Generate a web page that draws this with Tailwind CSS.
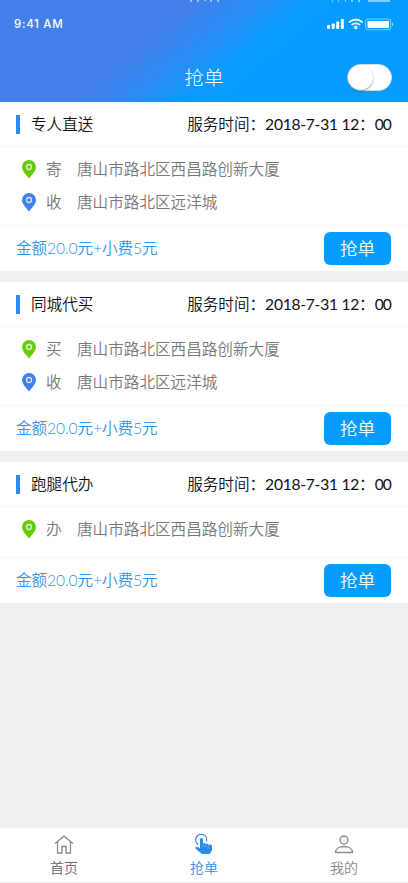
<!DOCTYPE html>
<html lang="zh-CN">
<head>
    <meta charset="UTF-8">
    <meta name="viewport" content="width=device-width, initial-scale=1.0">
    <title>抢单</title>
    <script src="https://cdn.jsdelivr.net/npm/@tailwindcss/browser@4"></script>
</head>
<body class="bg-[#f0f0f0] font-['Lato','Noto_Sans_CJK_SC',sans-serif] font-[350]">
<div class="w-[408px] h-[883px] flex flex-col overflow-hidden">

    <!-- header -->
    <header class="relative h-[102px] shrink-0 text-white bg-[linear-gradient(140deg,#4480e9_0%,#4480e9_37%,#2c8bf3_47%,#0a9bfe_59%,#059cff_66%)]">
        <svg class="absolute top-0 left-0" width="408" height="3" fill="#fff" fill-opacity=".5">
            <path d="M190 0h2v2h-2zM197 0h2v2h-2zM204 0h2v1h-2zM210 0h2v2h-2zM217 0h2v2h-2zM332 0h1v2h-1zM338 0h1v2h-1zM345 0h1v2h-1zM351 0h2v2h-2zM358 0h2v2h-2zM368 0h22v2h-22z"/>
        </svg>
        <div class="flex justify-between items-center h-12 pl-3.5 pr-2">
            <span class="pt-[2px] font-['Inter',sans-serif] font-medium text-[11.5px] tracking-[0.7px]">9:41 AM</span>
            <svg width="74" height="14" viewBox="0 0 74 14">
                <g fill="#fff">
                    <rect x="1" y="8" width="3" height="4" rx=".8"/>
                    <rect x="5.7" y="6.5" width="3" height="5.5" rx=".8"/>
                    <rect x="10.2" y="4.5" width="3" height="7.5" rx=".8"/>
                    <rect x="14.8" y="2" width="3" height="10" rx=".8"/>
                    <circle cx="29.8" cy="10.4" r="1.8"/>
                    <rect x="41.5" y="3.9" width="21.5" height="7" rx=".8"/>
                    <path d="M66 5.5c1.6.3 1.6 3.5 0 3.8z" opacity=".6"/>
                </g>
                <g fill="none" stroke="#fff">
                    <path stroke-width="1.7" d="M23 5.3a9.8 9.8 0 0 1 13.6 0M25.6 8a6 6 0 0 1 8.4 0"/>
                    <rect x="39.7" y="2.1" width="25" height="10.6" rx="2" opacity=".5"/>
                </g>
            </svg>
        </div>
        <div class="grid grid-cols-3 items-center h-[59px] px-4">
            <span></span>
            <h1 class="text-center text-[19.5px] font-light">抢单</h1>
            <button class="justify-self-end w-[45px] h-[27px] rounded-full bg-white border border-[#d5dce2]">
                <span class="block w-[25px] h-[25px] rounded-full bg-white shadow-[0_1px_2px_rgba(0,0,0,0.4)]"></span>
            </button>
        </div>
    </header>

    <main class="flex-1 flex flex-col gap-[11px] text-[15.6px]">
        <!-- 专人直送 -->
        <section class="bg-white">
            <div class="flex items-center h-[45px] pl-4 pr-[17px] text-[#111] border-b border-[#f6f6f6]">
                <i class="w-1 h-[19px] bg-[#2a8bf3] mr-[11px]"></i>
                <h2 class="flex-1 pt-[2px]">专人直送</h2>
                <p class="pt-[2px]">服务时间：<span class="font-normal tracking-[-0.25px]">2018-7-31 12</span>：<span class="font-normal tracking-[-0.9px]">00</span></p>
            </div>
            <div class="h-[79px] pt-[6px] text-[#777] border-b border-[#f6f6f6]">
                <div class="flex items-center h-[33px] pl-[22px]">
                    <svg class="mr-[10px]" width="14" height="19" viewBox="0 0 14 19"><path fill="#66cc0a" d="M7 0a7 7 0 0 1 7 7c0 4-4.5 8-7 11.5C4.5 15 0 11 0 7a7 7 0 0 1 7-7z"/><circle cx="7" cy="7" r="2.5" fill="none" stroke="#fff" stroke-opacity=".8" stroke-width="1.3"/></svg>
                    <span class="w-[31px] pt-px">寄</span><span class="pt-px">唐山市路北区西昌路创新大厦</span>
                </div>
                <div class="flex items-center h-[33px] pl-[22px]">
                    <svg class="mr-[10px]" width="14" height="19" viewBox="0 0 14 19"><path fill="#4480e9" d="M7 0a7 7 0 0 1 7 7c0 4-4.5 8-7 11.5C4.5 15 0 11 0 7a7 7 0 0 1 7-7z"/><circle cx="7" cy="7" r="2.5" fill="none" stroke="#fff" stroke-opacity=".8" stroke-width="1.3"/></svg>
                    <span class="w-[31px] pt-px">收</span><span class="pt-px">唐山市路北区远洋城</span>
                </div>
            </div>
            <div class="flex items-center justify-between h-[45px] pl-4 pr-[17px] text-[#2b94ec]">
                <p class="pt-px tracking-[-0.08px]">金额20.0元+小费5元</p>
                <button class="w-[67px] h-[33px] rounded-md bg-[#059cff] text-white text-[17.5px] pt-px">抢单</button>
            </div>
        </section>

        <!-- 同城代买 -->
        <section class="bg-white">
            <div class="flex items-center h-[45px] pl-4 pr-[17px] text-[#111] border-b border-[#f6f6f6]">
                <i class="w-1 h-[19px] bg-[#2a8bf3] mr-[11px]"></i>
                <h2 class="flex-1 pt-[2px]">同城代买</h2>
                <p class="pt-[2px]">服务时间：<span class="font-normal tracking-[-0.25px]">2018-7-31 12</span>：<span class="font-normal tracking-[-0.9px]">00</span></p>
            </div>
            <div class="h-[79px] pt-[6px] text-[#777] border-b border-[#f6f6f6]">
                <div class="flex items-center h-[33px] pl-[22px]">
                    <svg class="mr-[10px]" width="14" height="19" viewBox="0 0 14 19"><path fill="#66cc0a" d="M7 0a7 7 0 0 1 7 7c0 4-4.5 8-7 11.5C4.5 15 0 11 0 7a7 7 0 0 1 7-7z"/><circle cx="7" cy="7" r="2.5" fill="none" stroke="#fff" stroke-opacity=".8" stroke-width="1.3"/></svg>
                    <span class="w-[31px] pt-px">买</span><span class="pt-px">唐山市路北区西昌路创新大厦</span>
                </div>
                <div class="flex items-center h-[33px] pl-[22px]">
                    <svg class="mr-[10px]" width="14" height="19" viewBox="0 0 14 19"><path fill="#4480e9" d="M7 0a7 7 0 0 1 7 7c0 4-4.5 8-7 11.5C4.5 15 0 11 0 7a7 7 0 0 1 7-7z"/><circle cx="7" cy="7" r="2.5" fill="none" stroke="#fff" stroke-opacity=".8" stroke-width="1.3"/></svg>
                    <span class="w-[31px] pt-px">收</span><span class="pt-px">唐山市路北区远洋城</span>
                </div>
            </div>
            <div class="flex items-center justify-between h-[45px] pl-4 pr-[17px] text-[#2b94ec]">
                <p class="pt-px tracking-[-0.08px]">金额20.0元+小费5元</p>
                <button class="w-[67px] h-[33px] rounded-md bg-[#059cff] text-white text-[17.5px] pt-px">抢单</button>
            </div>
        </section>

        <!-- 跑腿代办 -->
        <section class="bg-white">
            <div class="flex items-center h-[45px] pl-4 pr-[17px] text-[#111] border-b border-[#f6f6f6]">
                <i class="w-1 h-[19px] bg-[#2a8bf3] mr-[11px]"></i>
                <h2 class="flex-1 pt-[2px]">跑腿代办</h2>
                <p class="pt-[2px]">服务时间：<span class="font-normal tracking-[-0.25px]">2018-7-31 12</span>：<span class="font-normal tracking-[-0.9px]">00</span></p>
            </div>
            <div class="h-[51px] pt-[6px] text-[#777] border-b border-[#f6f6f6]">
                <div class="flex items-center h-[33px] pl-[22px]">
                    <svg class="mr-[10px]" width="14" height="19" viewBox="0 0 14 19"><path fill="#66cc0a" d="M7 0a7 7 0 0 1 7 7c0 4-4.5 8-7 11.5C4.5 15 0 11 0 7a7 7 0 0 1 7-7z"/><circle cx="7" cy="7" r="2.5" fill="none" stroke="#fff" stroke-opacity=".8" stroke-width="1.3"/></svg>
                    <span class="w-[31px] pt-px">办</span><span class="pt-px">唐山市路北区西昌路创新大厦</span>
                </div>
            </div>
            <div class="flex items-center justify-between h-[45px] pl-4 pr-[17px] text-[#2b94ec]">
                <p class="pt-px tracking-[-0.08px]">金额20.0元+小费5元</p>
                <button class="w-[67px] h-[33px] rounded-md bg-[#059cff] text-white text-[17.5px] pt-px">抢单</button>
            </div>
        </section>
    </main>

    <!-- tab bar -->
    <nav class="h-[55px] shrink-0 flex justify-between px-[44px] pt-[5px] bg-white border-b border-[#e8e8e8] text-[14px] leading-[20px] text-[#666]">
        <a class="w-10 flex flex-col items-center gap-[3px]">
            <svg width="22" height="22" viewBox="0 0 22 22" fill="none" stroke="#888" stroke-width="1.3"><path d="M2 10.5 11 3l9 7.5M4.500 9v11h4.500v-6.500h4V20h4.500V9"/></svg>
            <span>首页</span>
        </a>
        <a class="w-10 flex flex-col items-center gap-[3px] text-[#2b94ec]">
            <svg width="22" height="22" viewBox="0 0 22 22"><path d="M5.200 11.500A5.500 5.500 0 1 1 13.400 8.500" fill="none" stroke="#2b8bec" stroke-width="1.3"/><path fill="#2b8bec" d="M7 6.500c0-2 3-2 3 0v4c.8-.7 2.500-.4 2.800.4.900-.5 2.400-.2 2.700.7 1.300-.5 3.500 0 3.500 1.300v4.600L16.500 21H9L3.500 16.500c-2-1.800-.6-3.300 1-2.500l2.500 1.200z"/><path d="M10 10.500v3M12.800 11v3M15.500 12v2.500" stroke="#8cc2f6" stroke-width=".5"/></svg>
            <span>抢单</span>
        </a>
        <a class="w-10 flex flex-col items-center gap-[3px] text-[#888]">
            <svg width="22" height="22" viewBox="0 0 22 22" fill="none" stroke="#888" stroke-width="1.3"><circle cx="11" cy="7" r="4"/><path d="M2.500 19.500c0-4 4-6 8.500-6s8.500 2 8.500 6z"/></svg>
            <span>我的</span>
        </a>
    </nav>
</div>
</body>
</html>
